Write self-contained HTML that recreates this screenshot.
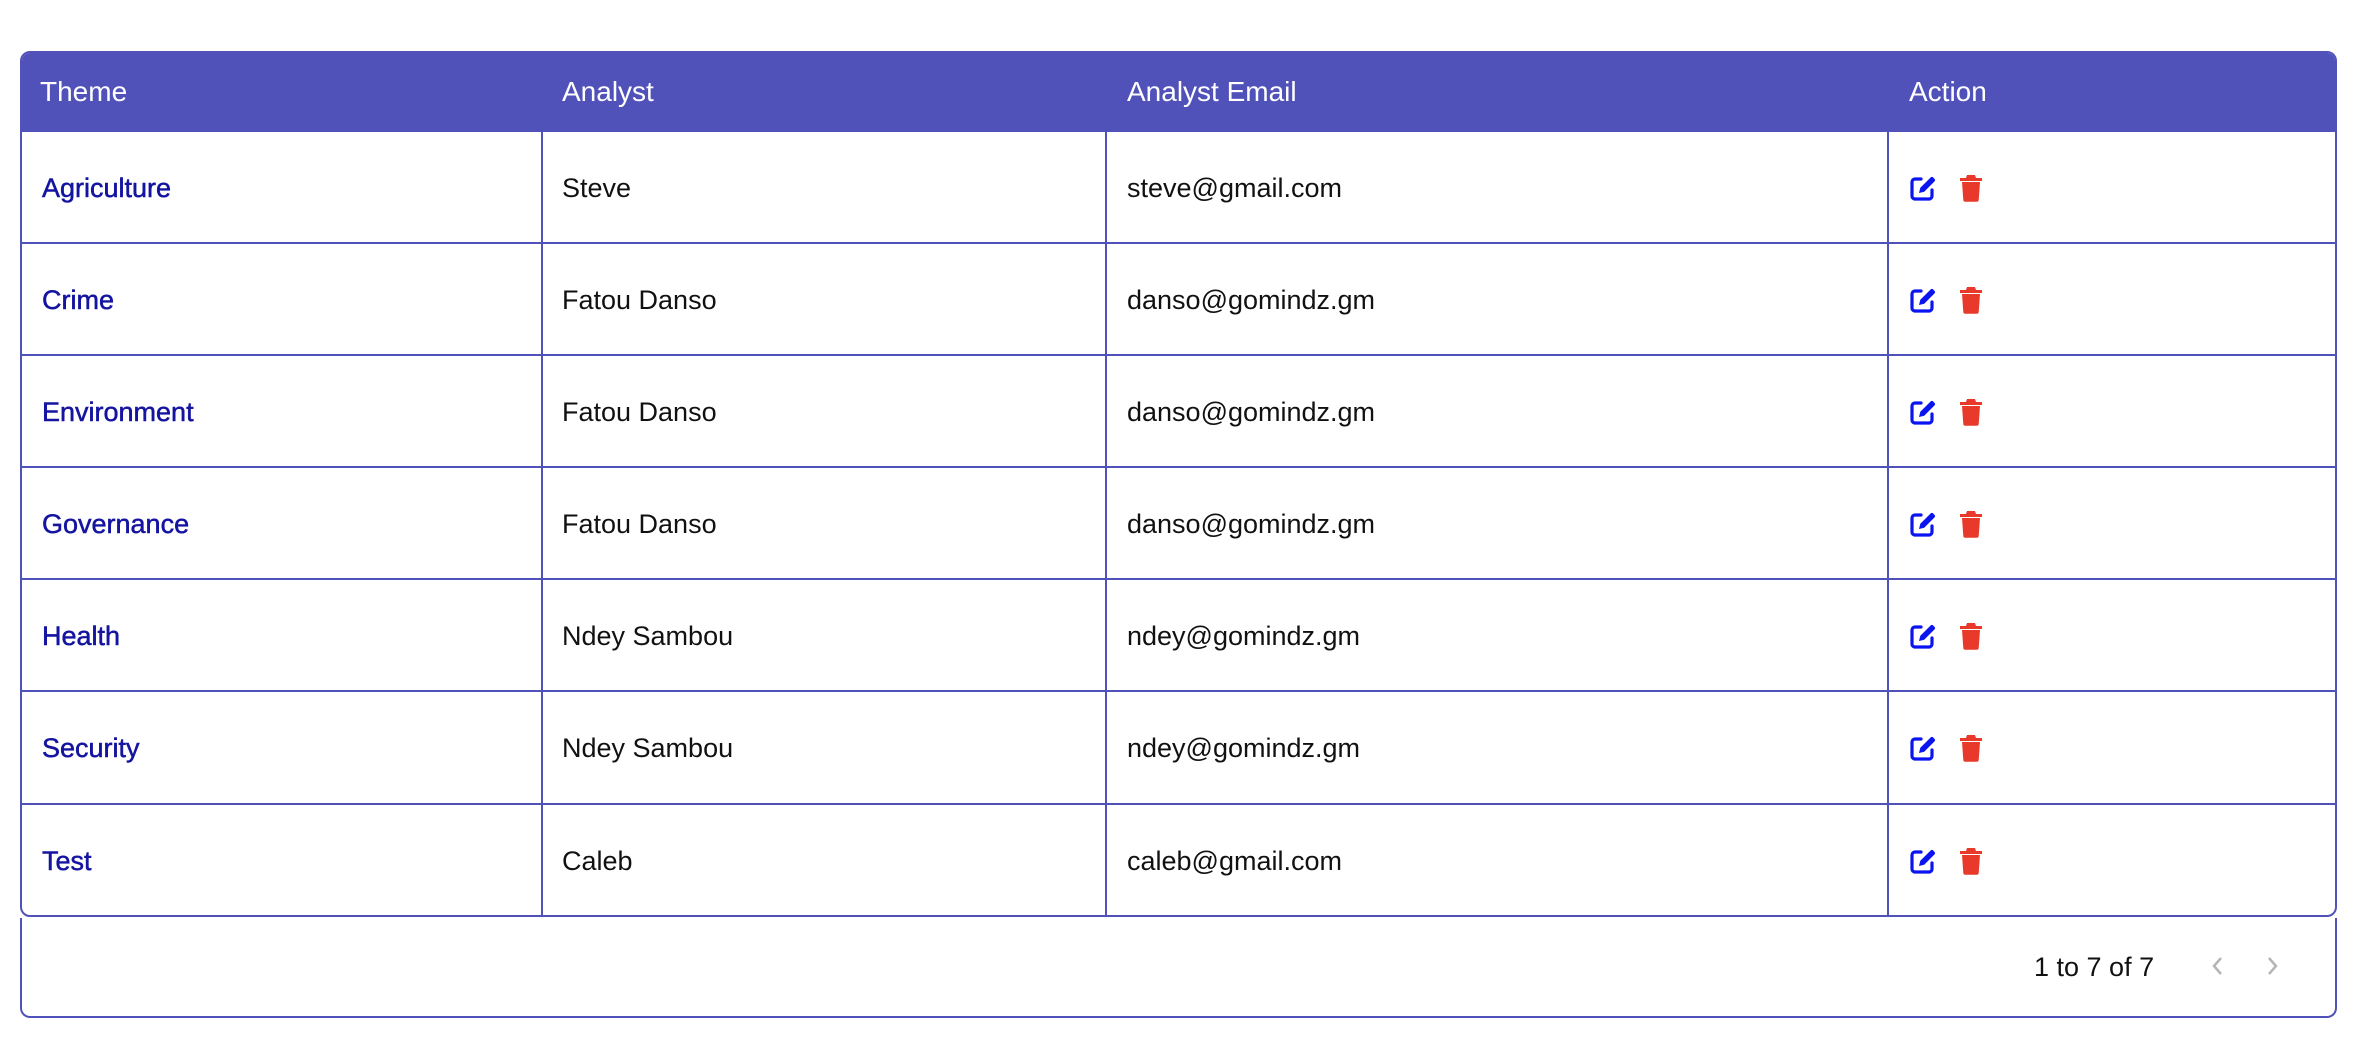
<!DOCTYPE html>
<html><head><meta charset="utf-8"><style>
*{box-sizing:border-box;margin:0;padding:0}
body{width:2358px;height:1050px;background:#fff;font-family:"Liberation Sans",sans-serif;position:relative;overflow:hidden}
.tbl{position:absolute;left:20px;top:51px;width:2317px;height:866px;border:2px solid #5052BA;border-radius:10px;overflow:hidden}
.hd{position:absolute;left:0;top:-2px;right:0;height:81px;background:#5052BA;color:#fff;font-size:28px}
.hd span{position:absolute;top:0;line-height:81px}
.row{position:absolute;left:0;right:0;height:112px;border-top:2px solid #5052BA;font-size:27px;color:#111}
.row span{position:absolute;top:1px;line-height:110px}
.th{color:#1414a0;-webkit-text-stroke:0.5px #1414a0}
.vl{position:absolute;top:79px;bottom:0;width:2px;background:#5052BA}
.ft{position:absolute;left:20px;top:918px;width:2317px;height:100px;border:2px solid #5052BA;border-top:none;border-radius:0 0 10px 10px}
.ic{position:absolute;top:41px}
</style></head><body>
<div class="tbl">
<div class="hd"><span style="left:18px">Theme</span><span style="left:540px">Analyst</span><span style="left:1105px">Analyst Email</span><span style="left:1887px">Action</span></div>
<div class="vl" style="left:519px"></div><div class="vl" style="left:1083px"></div><div class="vl" style="left:1865px"></div>
</div>
<div class="ft">
<span style="position:absolute;left:2012px;top:1px;line-height:96px;font-size:27px;color:#111">1 to 7 of 7</span>
<svg style="position:absolute;left:2186px;top:36px" width="20" height="24" viewBox="0 0 20 24"><path d="M13 4L6 12L13 20" fill="none" stroke="#b5b5b5" stroke-width="2.5"/></svg>
<svg style="position:absolute;left:2240px;top:36px" width="20" height="24" viewBox="0 0 20 24"><path d="M7 4L14 12L7 20" fill="none" stroke="#b5b5b5" stroke-width="2.5"/></svg>
</div>
<script>
const d=[["Agriculture","Steve","steve@gmail.com"],["Crime","Fatou Danso","danso@gomindz.gm"],["Environment","Fatou Danso","danso@gomindz.gm"],["Governance","Fatou Danso","danso@gomindz.gm"],["Health","Ndey Sambou","ndey@gomindz.gm"],["Security","Ndey Sambou","ndey@gomindz.gm"],["Test","Caleb","caleb@gmail.com"]];
const tops=[132,244,356,468,580,692,805];
let h='';
d.forEach((r,i)=>{
h+=`<div class="row" style="top:${tops[i]-55}px"><span class="th" style="left:20px">${r[0]}</span><span style="left:540px">${r[1]}</span><span style="left:1105px">${r[2]}</span>
<svg class="ic" style="left:1886px" width="30" height="30" viewBox="0 0 30 30"><path d="M13 6H7a3 3 0 0 0-3 3v14a3 3 0 0 0 3 3h14a3 3 0 0 0 3-3v-6" fill="none" stroke="#0a14f0" stroke-width="3.2" stroke-linecap="round"/><path d="M11 20l1.3-5.2L22.5 4.6a2 2 0 0 1 2.8 0l1.1 1.1a2 2 0 0 1 0 2.8L16.2 18.7z" fill="#0a14f0"/></svg>
<svg class="ic" style="left:1934px" width="30" height="30" viewBox="0 0 30 30"><path d="M4 5h22v3H4z" fill="#e8392b"/><path d="M11 2h8l1 3h-10z" fill="#e8392b"/><path d="M6 9h18l-1.3 18a2 2 0 0 1-2 1.8H9.3a2 2 0 0 1-2-1.8z" fill="#e8392b"/></svg></div>`;
});
document.querySelector('.tbl').insertAdjacentHTML('beforeend',h);
</script>
</body></html>
